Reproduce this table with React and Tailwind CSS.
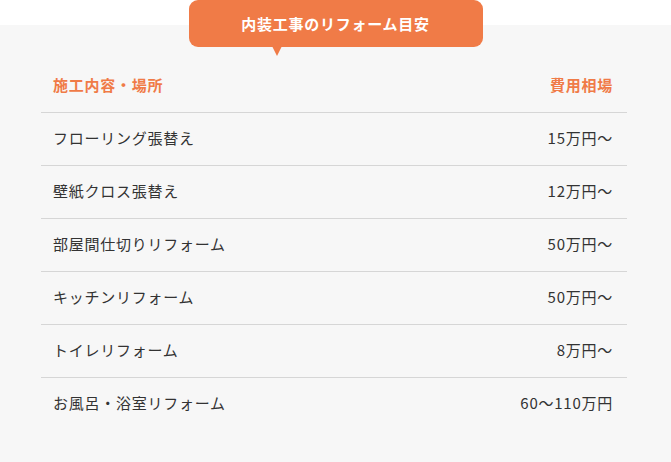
import React from "react";

const rows = [
  { place: "フローリング張替え", price: "15万円〜" },
  { place: "壁紙クロス張替え", price: "12万円〜" },
  { place: "部屋間仕切りリフォーム", price: "50万円〜" },
  { place: "キッチンリフォーム", price: "50万円〜" },
  { place: "トイレリフォーム", price: "8万円〜" },
  { place: "お風呂・浴室リフォーム", price: "60〜110万円" },
];

const App = () => {
  return (
    <div
      className="w-[671px] h-[462px] bg-white overflow-hidden"
      style={{ fontFamily: '"Noto Sans CJK JP", "Noto Sans", sans-serif' }}
    >
      <div className="flow-root mt-[25px] h-[437px] bg-[#f7f7f7]">
        <div className="relative mx-auto -mt-[25px] w-[294px] h-[47px] rounded-[9px] bg-[#f07b47] flex items-center justify-center">
          <span className="text-white font-bold text-[15px] tracking-[0.05em] leading-5">
            内装工事のリフォーム目安
          </span>
          <div className="absolute left-[83px] top-[46px] w-0 h-0 border-l-[5px] border-r-[5px] border-t-[10px] border-l-transparent border-r-transparent border-t-[#f07b47]" />
        </div>

        <div className="ml-[41px] mr-[44px] mt-[28px]">
          <div className="flex justify-between px-[12px] pr-[14px] pb-[17px] border-b border-[#d6d6d6] text-[#f07b47] font-bold text-[15px] tracking-[0.05em] leading-5">
            <span>施工内容・場所</span>
            <span>費用相場</span>
          </div>
          {rows.map((r, i) => (
            <div
              key={r.place}
              className={`flex items-center justify-between h-[53px] pb-[2px] pl-[12px] pr-[14px] text-[#333333] text-[15px] tracking-[0.05em] ${
                i < rows.length - 1 ? "border-b border-[#d6d6d6]" : ""
              }`}
            >
              <span>{r.place}</span>
              <span>{r.price}</span>
            </div>
          ))}
        </div>
      </div>
    </div>
  );
};

export default App;
